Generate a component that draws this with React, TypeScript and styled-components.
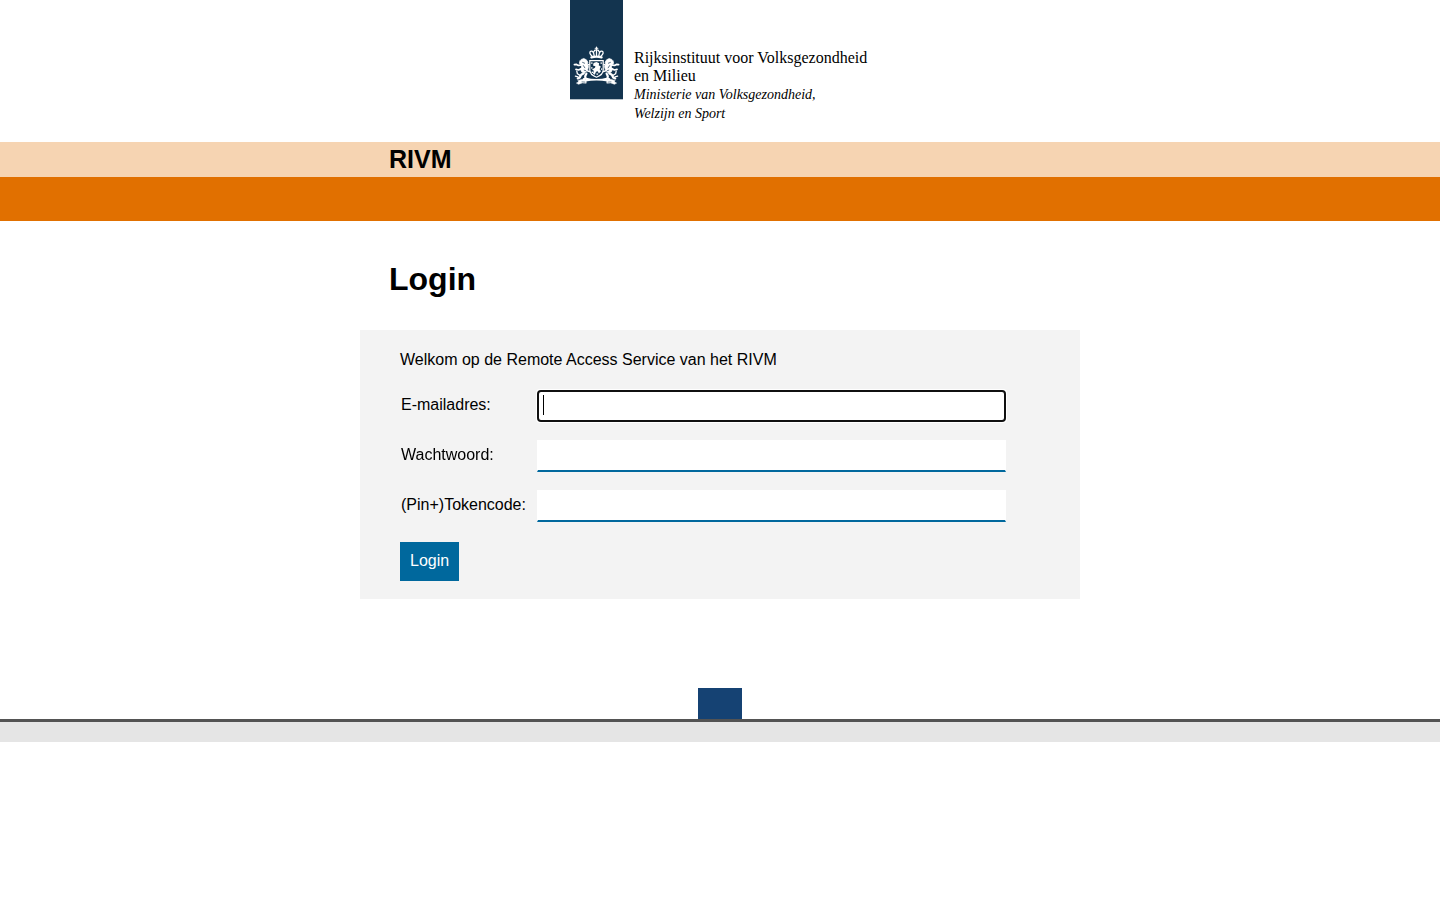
import React from "react";
import styled, { createGlobalStyle } from "styled-components";

const GlobalStyle = createGlobalStyle`
  *, *::before, *::after { box-sizing: border-box; }
  body {
    margin: 0;
    background: #fff;
    color: #000;
    font: 16px/20px "Liberation Sans", Arial, sans-serif;
  }
`;

const Header = styled.header`
  display: flex;
  justify-content: center;
  height: 142px;
`;

const Logo = styled.div`
  display: flex;
  gap: 11px;
  width: 300px;
`;

const Ribbon = styled.svg`
  flex: none;
  width: 53px;
  height: 100px;
`;

const Wordmark = styled.div`
  padding-top: 49px;
  font-family: "Liberation Serif", "Times New Roman", serif;
  white-space: nowrap;
`;

const Institute = styled.p`
  margin: 0;
  font-size: 16px;
  line-height: 18px;
`;

const Ministry = styled.p`
  margin: 0;
  font-size: 14px;
  line-height: 19px;
  font-style: italic;
`;

const Container = styled.div`
  max-width: 720px;
  margin: 0 auto;
`;

const TitleBand = styled.div`
  background: #f6d4b2;
`;

const SiteTitle = styled.p`
  margin: 0;
  padding: 0 29px;
  font-size: 25px;
  font-weight: bold;
  line-height: 35px;
`;

const NavBand = styled.div`
  height: 44px;
  background: #e17000;
`;

const PageTitle = styled.h1`
  margin: 0;
  padding: 40px 29px 33px;
  font-size: 32px;
  line-height: 36px;
`;

const Panel = styled.form`
  padding: 20px 40px 18px;
  background: #f3f3f3;
`;

const Welcome = styled.p`
  margin: 0 0 20px;
`;

const Fields = styled.div`
  display: grid;
  gap: 18px;
  margin-bottom: 20px;
`;

const Field = styled.div`
  display: grid;
  grid-template-columns: 136px minmax(0, 469px);
  align-items: center;
`;

const Label = styled.label`
  padding: 0 1px 2px;
`;

const TextInput = styled.input`
  width: 100%;
  height: 32px;
  margin: 0 0 0 1px;
  padding: 4px 5px;
  border: 1px solid #fff;
  border-bottom: 2px solid #00689d;
  border-radius: 0;
  background: #fff;
  font: inherit;

  /* steady caret while the focused field is empty */
  &:focus:placeholder-shown {
    caret-color: transparent;
    background: linear-gradient(#000, #000) 5px 4px / 1px 20px no-repeat #fff;
  }
`;

const SubmitButton = styled.button`
  display: block;
  height: 39px;
  padding: 0 10px 2px;
  border: 0;
  background: #00689d;
  color: #fff;
  font: inherit;
`;

const Footer = styled.footer`
  margin-top: 89px;
`;

const FooterMark = styled.div`
  width: 44px;
  height: 31px;
  margin: 0 auto;
  background: #154273;
`;

const FooterBar = styled.div`
  height: 23px;
  border-top: 3px solid #535353;
  background: #e5e5e5;
`;

const NAVY = "#13344f";

const Lion = () => (
  <g fill="none" stroke="#fff" strokeLinecap="round" strokeLinejoin="round">
    <path
      d="M11.4 59.4l2.4-.9 2.6 1.3 1.5 2.4-.6 2 1.2 2.2-.8 3.4-2.4 2.6-3.4-.2-1.4-2.6 1.2-2.6-.8-2.2-1.6-1.6.6-2.2z"
      fill="#fff"
      strokeWidth=".7"
    />
    <path d="M11 65.2l-2.6.2-1.8-1-2.2.3M11.4 68.6l-2.8 1.4-2.6-.6" strokeWidth="1.7" />
    <path d="M13.8 73.2l-2.6 1.6-1.4 2.6-2 1M16.4 73.6l-1.2 2.6.2 2-1.6 1" strokeWidth="2.2" />
    <path d="M10 75.4l-2.6-1.6-.6-2.6M8 76.8l-2.6-.6" strokeWidth="1.3" />
    <path d="M16.6 65.6l2.4-1.2M17.2 70.8l2.4.8" strokeWidth="1.5" />
    <path d="M12.6 62.4l2 .8M13.4 65.6l1.4 2.2M14.2 70.2l1.4.4" stroke={NAVY} strokeWidth=".7" />
    <path d="M8.2 80.4l3.6-1 4.4.4v3.4l-4-.3-3.6 1.4-2.2-1.2 2-1.2z" fill="#fff" strokeWidth=".5" />
    <path d="M12 81.9l3 .2" stroke={NAVY} strokeWidth=".6" />
  </g>
);

const CoatOfArms = () => (
  <Ribbon viewBox="0 0 53 100" role="img" aria-label="Rijkswapen">
    <rect width="53" height="99" fill={NAVY} />
    <rect y="99" width="53" height="1" fill="#b8c2ca" />
    <g fill="none" stroke="#fff" strokeLinecap="round">
      <path d="M26.5 47v3M25.2 48.2h2.6" strokeWidth="1.1" />
      <path d="M22.2 56.2c-2.8-2-3-4.6-1.2-5 1.8-.4 2.8 1.2 3.2 4.6M30.8 56.2c2.8-2 3-4.6 1.2-5-1.8-.4-2.8 1.2-3.2 4.6M23.8 51.8c.6-2.6 4.8-2.6 5.4 0M26.5 50.6v5" strokeWidth="1.3" />
      <path d="M21.4 57.4q5.1-1.5 10.2 0" strokeWidth="2.2" />
    </g>
    <path
      d="M19.8 60.6h13.4v9.4q0 4.8-6.7 7.2-6.7-2.4-6.7-7.2z"
      fill={NAVY}
      stroke="#fff"
      strokeWidth="1.2"
    />
    <path d="M23.6 63l2.8-1.1 2.8 1.3-.5 2 2.1 1.4-1.2 2.6 1.4 2-2.2 2.4-1-2.4-1.8.6-1.2 3-1.8-1 .8-3-1.8-1.2 3-1.8.4-1.6-2.4-.7z" fill="#fff" />
    <g fill="#fff">
      <rect x="21.1" y="62.4" width="1.4" height="1.4" />
      <rect x="30.5" y="62.4" width="1.4" height="1.4" />
      <rect x="21.1" y="67.2" width="1.4" height="1.4" />
      <rect x="31" y="68.4" width="1.2" height="1.4" />
      <rect x="21.6" y="71.6" width="1.4" height="1.4" />
      <rect x="26.5" y="73.4" width="1.4" height="1.4" />
    </g>
    <Lion />
    <g transform="translate(53 0) scale(-1 1)">
      <Lion />
    </g>
    <path d="M15.4 77.4q11.1 3 22.2 0v4.2q-11.1-2.2-22.2 0z" fill="#fff" />
  </Ribbon>
);

interface LoginFieldProps {
  id: string;
  label: string;
  type?: string;
  autoFocus?: boolean;
}

const LoginField = ({ id, label, type = "text", autoFocus }: LoginFieldProps) => (
  <Field>
    <Label htmlFor={id}>{label}</Label>
    <TextInput id={id} name={id} type={type} placeholder=" " autoFocus={autoFocus} />
  </Field>
);

export default function App() {
  return (
    <>
      <GlobalStyle />
      <Header>
        <Logo>
          <CoatOfArms />
          <Wordmark>
            <Institute>
              Rijksinstituut voor Volksgezondheid
              <br />
              en Milieu
            </Institute>
            <Ministry>
              Ministerie van Volksgezondheid,
              <br />
              Welzijn en Sport
            </Ministry>
          </Wordmark>
        </Logo>
      </Header>
      <TitleBand>
        <Container>
          <SiteTitle>RIVM</SiteTitle>
        </Container>
      </TitleBand>
      <NavBand />
      <Container as="main">
        <PageTitle>Login</PageTitle>
        <Panel onSubmit={(event) => event.preventDefault()}>
          <Welcome>Welkom op de Remote Access Service van het RIVM</Welcome>
          <Fields>
            <LoginField id="email" label="E-mailadres:" autoFocus />
            <LoginField id="password" label="Wachtwoord:" type="password" />
            <LoginField id="token" label="(Pin+)Tokencode:" type="password" />
          </Fields>
          <SubmitButton type="submit">Login</SubmitButton>
        </Panel>
      </Container>
      <Footer>
        <FooterMark />
        <FooterBar />
      </Footer>
    </>
  );
}
